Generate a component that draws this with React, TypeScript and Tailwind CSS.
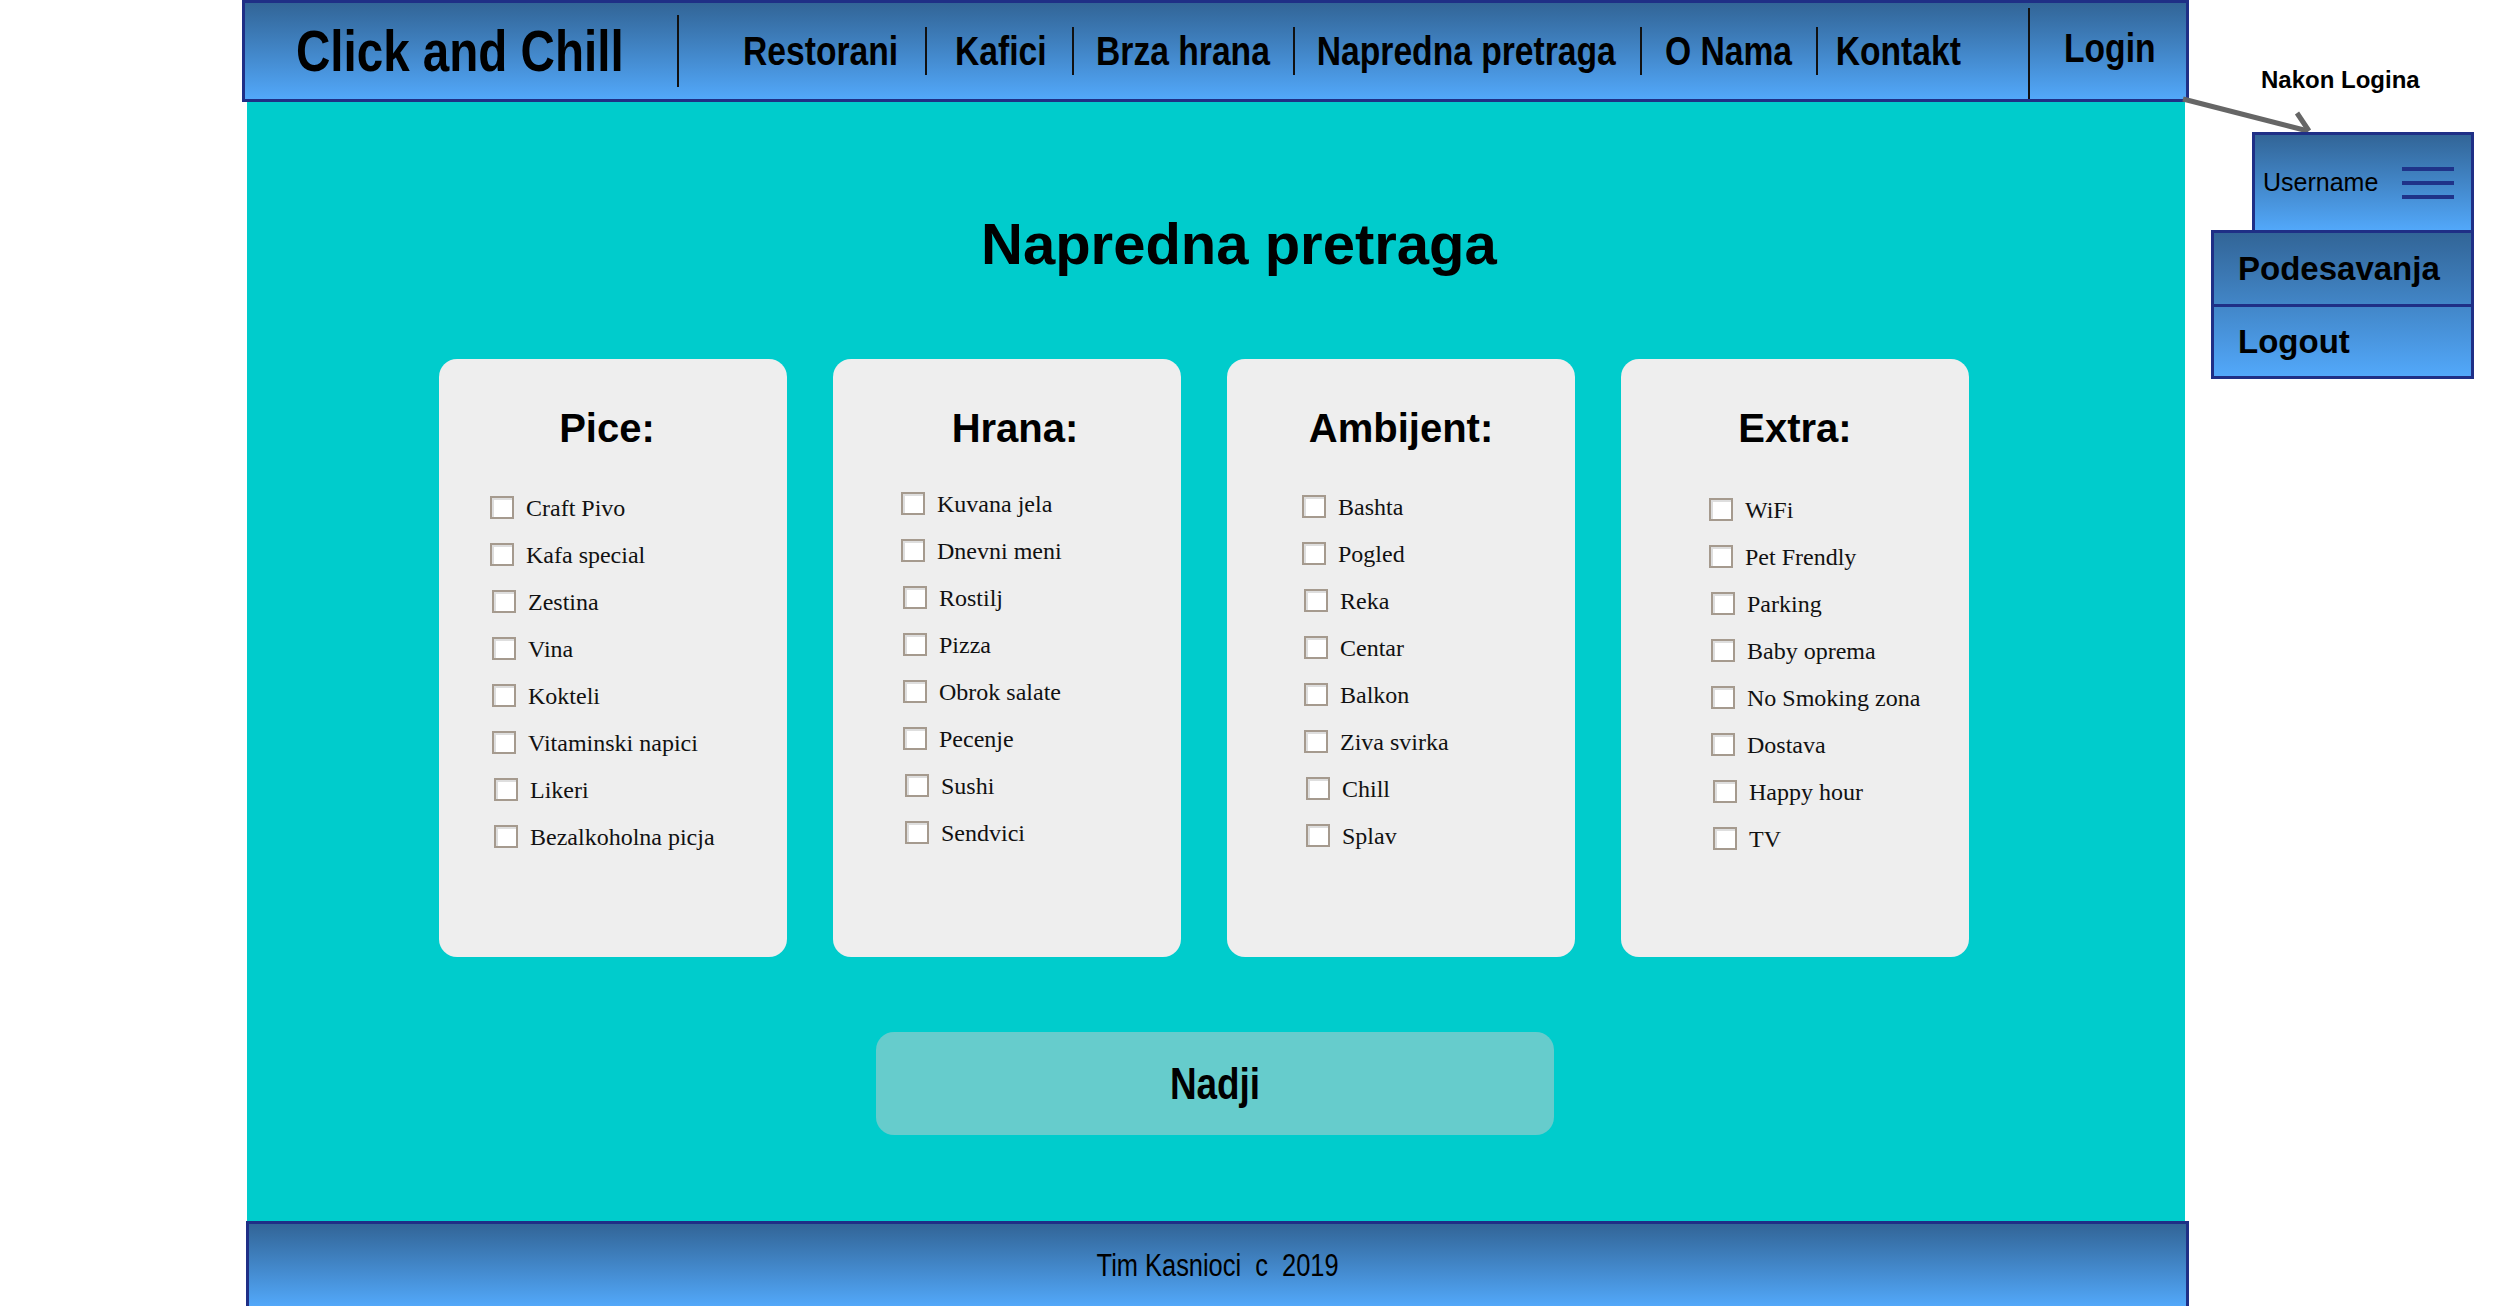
const sans = "font-['Liberation_Sans',Arial,sans-serif]";
const serif = "font-['Liberation_Serif','Times_New_Roman',serif]";
const bar = "bg-linear-to-b from-[#326597] to-[#52a8fa]";

// the mockup uses a condensed Arial; no narrow face is installed, so squeeze Liberation Sans
function Squeezed({ text, w, className }: { text: string; w: string; className: string }) {
  return (
    <span className={`flex justify-center shrink-0 ${w}`}>
      <span className={`${sans} shrink-0 whitespace-pre leading-none text-black scale-x-[0.82] ${className}`}>{text}</span>
    </span>
  );
}

const navItems = [
  { label: "Restorani", w: "w-[154px]", pad: "pl-[65px] pr-[27px]" },
  { label: "Kafici", w: "w-[93px]", pad: "pl-[27px] pr-[25px]" },
  { label: "Brza hrana", w: "w-[175px]", pad: "pl-[21px] pr-[23px]" },
  { label: "Napredna pretraga", w: "w-[302px]", pad: "pl-[20px] pr-[23px]" },
  { label: "O Nama", w: "w-[128px]", pad: "pl-[22px] pr-[24px]" },
  { label: "Kontakt", w: "w-[126px]", pad: "pl-[17px]" },
];

// rows drift a little to the right further down, as in the mockup
const rowShift = ["", "", "ml-[2px]", "ml-[2px]", "ml-[2px]", "ml-[2px]", "ml-[4px]", "ml-[4px]"];

const cards = [
  {
    title: "Pice:",
    titleShift: "pr-[12px]",
    pad: "pl-[51px]",
    top: "mt-[36px]",
    items: ["Craft Pivo", "Kafa special", "Zestina", "Vina", "Kokteli", "Vitaminski napici", "Likeri", "Bezalkoholna picja"],
  },
  {
    title: "Hrana:",
    titleShift: "pl-[16px]",
    pad: "pl-[68px]",
    top: "mt-[32px]",
    items: ["Kuvana jela", "Dnevni meni", "Rostilj", "Pizza", "Obrok salate", "Pecenje", "Sushi", "Sendvici"],
  },
  {
    title: "Ambijent:",
    titleShift: "",
    pad: "pl-[75px]",
    top: "mt-[35px]",
    items: ["Bashta", "Pogled", "Reka", "Centar", "Balkon", "Ziva svirka", "Chill", "Splav"],
  },
  {
    title: "Extra:",
    titleShift: "",
    pad: "pl-[88px]",
    top: "mt-[38px]",
    items: ["WiFi", "Pet Frendly", "Parking", "Baby oprema", "No Smoking zona", "Dostava", "Happy hour", "TV"],
  },
];

function Header() {
  return (
    <header className={`h-[102px] w-full border-[3px] border-[#1f2f86] ${bar} flex items-center`}>
      <div className="ml-[50px] w-[382px] shrink-0 flex">
        <Squeezed text="Click and Chill" w="w-[329px]" className="font-bold text-[58px]" />
      </div>
      <div className="w-[2px] h-[72px] bg-[#111] shrink-0" />
      <nav className="flex items-center">
        {navItems.map((item, i) => (
          <div key={item.label} className="flex items-center">
            {i > 0 && <div className="w-[2px] h-[48px] bg-[#111]" />}
            <div className={item.pad}>
              <Squeezed text={item.label} w={item.w} className="font-bold text-[41px]" />
            </div>
          </div>
        ))}
      </nav>
      <div className="ml-auto flex h-full items-end">
        <div className="w-[2px] h-[91px] bg-[#111]" />
        <div className="w-[156px] h-full flex items-center justify-center pb-[6px] pl-[4px]">
          <Squeezed text="Login" w="w-[91px]" className="font-bold text-[41px]" />
        </div>
      </div>
    </header>
  );
}

function Checkbox() {
  return (
    <span className="w-[24px] h-[23px] shrink-0 border-2 border-[#a59a8e] bg-white shadow-[inset_2px_2px_0_#dedede]" />
  );
}

function FilterCard({ card }: { card: (typeof cards)[number] }) {
  return (
    <div className="w-[348px] h-[598px] rounded-[18px] bg-[#eeeeee] pt-[49px] flex flex-col">
      <h2 className={`${sans} ${card.titleShift} font-bold text-[40px] leading-none text-black text-center`}>
        {card.title}
      </h2>
      <ul className={`${card.top} ${card.pad} flex flex-col`}>
        {card.items.map((item, i) => (
          <li key={item} className={`${rowShift[i]} h-[47px] flex items-center gap-[12px]`}>
            <Checkbox />
            <span className={`${serif} text-[24px] leading-none text-[#111]`}>{item}</span>
          </li>
        ))}
      </ul>
    </div>
  );
}

function AfterLogin() {
  return (
    <div className="flex flex-col items-start">
      <div className={`${sans} font-bold text-[24px] leading-none text-black ml-[72px] mt-[68px]`}>Nakon Logina</div>
      <div
        className={`relative ml-[63px] mt-[40px] w-[222px] h-[101px] border-[3px] border-[#1f2f86] ${bar} flex items-center justify-between pl-[8px] pr-[17px]`}
      >
        <span className={`${sans} text-[25px] leading-none text-black`}>Username</span>
        <div className="flex flex-col gap-[10px]">
          <div className="w-[52px] h-[4px] bg-[#1f3389]" />
          <div className="w-[52px] h-[4px] bg-[#1f3389]" />
          <div className="w-[52px] h-[4px] bg-[#1f3389]" />
        </div>
      </div>
      <div className={`relative ml-[22px] -mt-[3px] w-[263px] h-[149px] border-[3px] border-[#1f2f86] ${bar} flex flex-col`}>
        <div className="h-[74px] flex items-center pl-[24px] border-b-[3px] border-[#1f2f86]">
          <span className={`${sans} font-bold text-[33px] leading-none text-black`}>Podesavanja</span>
        </div>
        <div className="flex-1 flex items-center pl-[24px]">
          <span className={`${sans} font-bold text-[33px] leading-none text-black`}>Logout</span>
        </div>
      </div>
    </div>
  );
}

export default function App() {
  return (
    <div className="relative w-[2502px] h-[1306px] overflow-hidden bg-white flex">
      <div className="ml-[242px] w-[1947px] shrink-0 flex flex-col">
        <Header />
        <main className="ml-[5px] w-[1938px] h-[1119px] bg-[#00cccc] flex flex-col items-start pt-[113px]">
          <h1 className={`${sans} font-bold text-[58px] leading-none text-black ml-[734px]`}>Napredna pretraga</h1>
          <div className="flex gap-[46px] ml-[192px] mt-[86px]">
            {cards.map((card) => (
              <FilterCard key={card.title} card={card} />
            ))}
          </div>
          <button className="ml-[629px] mt-[75px] w-[678px] h-[103px] rounded-[18px] bg-[#66cccc] flex items-center justify-center">
            <Squeezed text="Nadji" w="w-[91px]" className="font-bold text-[45px]" />
          </button>
        </main>
        <footer
          className={`ml-[4px] w-[1943px] h-[85px] border-x-[3px] border-t-[3px] border-[#1f2f86] ${bar} flex items-center justify-center`}
        >
          <Squeezed text="Tim Kasnioci  c  2019" w="w-[247px]" className="text-[31px]" />
        </footer>
      </div>

      <svg className="absolute left-[2170px] top-[88px] w-[160px] h-[60px]" viewBox="0 0 160 60" fill="none">
        <line x1="13" y1="11" x2="138" y2="43" stroke="#666666" strokeWidth="5" />
        <line x1="127" y1="25" x2="139" y2="43" stroke="#666666" strokeWidth="5" />
      </svg>

      <AfterLogin />
    </div>
  );
}
